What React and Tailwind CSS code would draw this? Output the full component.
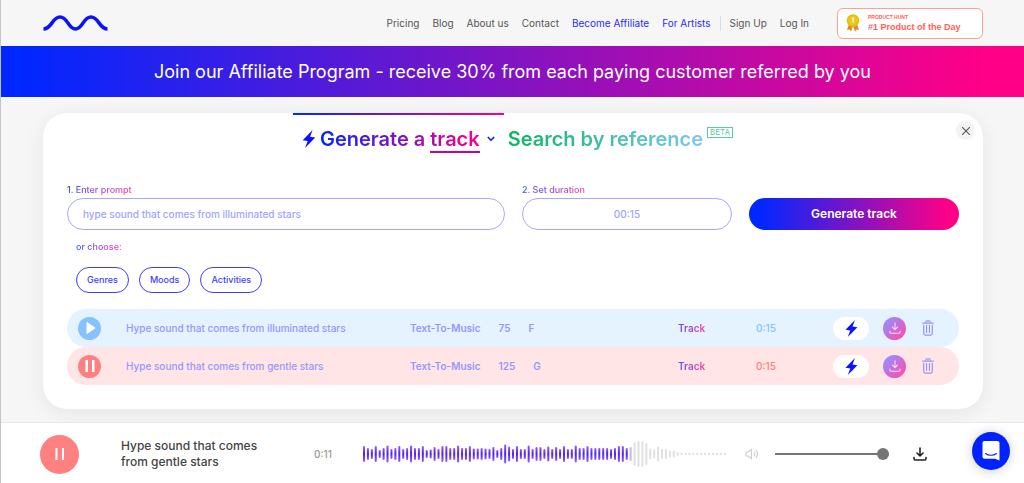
import { useState } from "react";

const navLinks = [
  { label: "Pricing" },
  { label: "Blog" },
  { label: "About us" },
  { label: "Contact" },
  { label: "Become Affiliate", highlight: true },
  { label: "For Artists", highlight: true },
];

const tracks = [
  { title: "Hype sound that comes from illuminated stars", bpm: "75", keyName: "F", time: "0:15", playing: false },
  { title: "Hype sound that comes from gentle stars", bpm: "125", keyName: "G", time: "0:15", playing: true },
];

const waveHeights = [
  16, 12, 10, 16, 8, 12, 17, 10, 12, 16, 10, 12, 17, 12, 12, 16, 8, 9, 14, 10, 16, 16, 12, 12,
  17, 12, 12, 16, 11, 11, 12, 11, 10, 14, 8, 12, 19, 15, 10, 16, 10, 10, 17, 10, 14, 14, 10, 15,
  10, 14, 10, 16, 10, 10, 17, 12, 12, 16, 12, 12, 12, 12, 12, 10, 12, 16, 16, 12, 14, 24, 26, 26,
  22, 11, 9, 15, 10, 10, 7, 7, 4, 2, 2, 2, 2, 2, 2, 2, 2, 2, 2, 2, 2,
];
const playedBars = 68;

function Bolt({ className }) {
  return (
    <svg viewBox="0 0 14 20" className={className} aria-hidden="true">
      <path d="M11 0 0 11.4l5.6.9L2.6 20 14 8.4l-5.8-.9z" fill="#0a12ff" />
    </svg>
  );
}

function DownloadIcon({ className, strokeWidth = 1.5 }) {
  return (
    <svg
      viewBox="0 0 14 14"
      className={className}
      fill="none"
      stroke="currentColor"
      strokeWidth={strokeWidth}
      strokeLinecap="round"
      strokeLinejoin="round"
      aria-hidden="true"
    >
      <path d="M7 1v8M4 6l3 3 3-3M1 10.500v1.200c0 .8.6 1.300 1.300 1.300h9.400c.7 0 1.300-.5 1.300-1.300v-1.200" />
    </svg>
  );
}

function TrashIcon() {
  return (
    <svg viewBox="0 0 14 18" className="h-4 w-3" fill="none" stroke="#9797ff" strokeWidth="1.400" strokeLinecap="round" aria-hidden="true">
      <path d="M.8 3.200h12.400M4.700 2.800V1.800c0-.6.4-1 1-1h2.600c.6 0 1 .4 1 1V2.800M2 5.500v10c0 1 .7 1.700 1.700 1.700h6.600c1 0 1.700-.7 1.700-1.700v-10M5.300 6v8M8.700 6v8" />
    </svg>
  );
}

function Header() {
  return (
    <header className="flex h-[46px] items-center justify-between pr-[41px] pl-[42px]">
      <a href="#home" aria-label="Home">
        <svg viewBox="0 0 65 18" className="h-[18px] w-[65px]" fill="none" aria-hidden="true">
          <path
            d="M.5 15C9 15 9 3 17 3s8 12 15.500 12S40 3 48 3s8 12 16.500 12"
            stroke="#0a12ff"
            strokeWidth="3.600"
          />
        </svg>
      </a>
      <div className="flex items-center">
        <nav className="flex items-center gap-[13px] text-[10px] leading-4 text-[#555]">
          {navLinks.map((l) => (
            <a key={l.label} href="#nav" className={l.highlight ? "text-[#2a2aff]" : ""}>
              {l.label}
            </a>
          ))}
          <span className="-mx-1 h-[15px] w-px bg-[#dcdcdc]" />
          <a href="#signup">Sign Up</a>
          <a href="#login">Log In</a>
        </nav>
        <a
          href="#product-hunt"
          className="ml-7 flex h-[31px] w-[146px] items-center gap-2 rounded-md border border-[#ff9f98] bg-white pl-2 text-[#ff6154]"
        >
          <svg viewBox="0 0 14 18" className="h-[18px] w-[14px]" aria-hidden="true">
            <path d="M3 10 1 16l2.500-.6L5 17.500 7 12l2 5.500 1.500-2.100L13 16l-2-6z" fill="#e08a2c" />
            <circle cx="7" cy="6.500" r="6.300" fill="#e3bd10" />
            <circle cx="7" cy="6.500" r="4.700" fill="#e8c91e" />
            <path d="M5.800 5 7.200 4v5" fill="none" stroke="#fff3b0" strokeWidth="1.200" />
          </svg>
          <span className="flex flex-col font-['Liberation_Sans',Arial,sans-serif] font-bold">
            <span className="text-[5px] leading-[8px]">PRODUCT HUNT</span>
            <span className="text-[9px] leading-[12px]">#1 Product of the Day</span>
          </span>
        </a>
      </div>
    </header>
  );
}

function Tabs() {
  return (
    <div role="tablist" className="flex justify-center text-[20px] leading-6 font-semibold">
      <button
        role="tab"
        aria-selected="true"
        className="flex h-[49px] items-center border-t-2 border-transparent bg-[linear-gradient(90deg,#0027ff,#ff0087)] bg-[length:100%_2px] bg-no-repeat bg-origin-border px-[9px]"
      >
        <Bolt className="mr-1 h-[18px] w-[14px]" />
        <span className="bg-[linear-gradient(90deg,#0027ff,#ff0087)] bg-clip-text text-transparent">
          Generate a <span className="border-b-2 border-[#c8009c]">track</span>
        </span>
        <svg viewBox="0 0 8 6" className="ml-[7px] h-[6px] w-2" fill="none" stroke="#0a12ff" strokeWidth="1.500" aria-hidden="true">
          <path d="m.8 1 3.200 3.200L7.200 1" />
        </svg>
      </button>
      <button role="tab" aria-selected="false" className="flex h-[49px] items-center gap-1 pt-[2px] pl-1">
        <span className="bg-[linear-gradient(90deg,#0bb55e,#7cc8f0)] bg-clip-text text-transparent">
          Search by reference
        </span>
        <span className="mb-3 border border-[#5cc9a8] px-[2px] text-[8px] leading-[9px] font-normal text-[#5cc9a8]">
          BETA
        </span>
      </button>
    </div>
  );
}

function PromptForm() {
  const labelStyle =
    "w-fit bg-[linear-gradient(90deg,#3b55ff,#ff3fa0)] bg-clip-text text-[9px] leading-[17px] font-medium text-transparent";
  return (
    <form onSubmit={(e) => e.preventDefault()} className="mt-[19px]">
      <div className="grid grid-cols-[1fr_210px_210px] items-end gap-[17px]">
        <div className="flex flex-col">
          <label htmlFor="prompt" className={labelStyle}>1. Enter prompt</label>
          <input
            id="prompt"
            defaultValue="hype sound that comes from illuminated stars"
            className="h-8 w-full rounded-full border border-[#a8a8ff] px-[15px] text-[10px] font-medium text-[#a3a3ff] outline-none"
          />
        </div>
        <div className="flex flex-col">
          <label htmlFor="duration" className={labelStyle}>2. Set duration</label>
          <input
            id="duration"
            defaultValue="00:15"
            className="h-8 w-full rounded-full border border-[#a8a8ff] text-center text-[10px] font-medium text-[#a3a3ff] outline-none"
          />
        </div>
        <button className="h-8 rounded-full bg-[linear-gradient(90deg,#0027ff_5%,#ff0087_95%)] text-[12px] font-semibold text-white">
          Generate track
        </button>
      </div>
      <div className="mt-2 pl-[9px]">
        <p className={labelStyle}>or choose:</p>
        <div className="mt-3 flex gap-[10px]">
          {["Genres", "Moods", "Activities"].map((c) => (
            <button
              key={c}
              type="button"
              className="h-[26px] rounded-full border border-[#4040ff] px-[10px] text-[9px] font-medium text-[#4040ff]"
            >
              {c}
            </button>
          ))}
        </div>
      </div>
    </form>
  );
}

function TrackRow({ track }) {
  return (
    <li
      className={`flex h-[38px] items-center rounded-full pr-[25px] pl-[11px] text-[10px] font-medium text-[#9797ff] ${
        track.playing ? "bg-[#ffe5e5]" : "bg-[#e5f2ff]"
      }`}
    >
      <button
        aria-label={track.playing ? "Pause" : "Play"}
        className={`flex size-[23px] items-center justify-center rounded-full ${
          track.playing ? "bg-[#ff8080]" : "bg-[#85c2ff]"
        }`}
      >
        <svg viewBox="0 0 12 12" className="size-3" fill="#fff" aria-hidden="true">
          {track.playing ? (
            <path d="M1.500 0h2.500v12H1.500zM8 0h2.500v12H8z" />
          ) : (
            <path d="M2.500.8c0-.6.5-.9 1-.6l7.500 5.200c.4.300.4.900 0 1.200l-7.500 5.200c-.5.300-1 0-1-.6z" />
          )}
        </svg>
      </button>
      <span className="ml-[25px] w-[284px]">{track.title}</span>
      <span className="flex w-[268px] gap-[18px] font-semibold">
        <span>Text-To-Music</span>
        <span>{track.bpm}</span>
        <span>{track.keyName}</span>
      </span>
      <span className="w-[78px] font-semibold">
        <span className="bg-[linear-gradient(90deg,#5c55e8,#ff3fa8)] bg-clip-text text-transparent">Track</span>
      </span>
      <span className={track.playing ? "text-[#ff8080]" : "text-[#85c2ff]"}>{track.time}</span>
      <div className="ml-auto flex items-center gap-[14px]">
        <button aria-label="Boost" className="flex h-[23px] w-9 items-center justify-center rounded-full bg-white">
          <Bolt className="h-[17px] w-[13px]" />
        </button>
        <button
          aria-label="Download track"
          className="flex size-[23px] items-center justify-center rounded-full bg-[linear-gradient(135deg,#9191ff_10%,#ff4db0_90%)] text-white/80"
        >
          <DownloadIcon className="size-3" strokeWidth={1.2} />
        </button>
        <button aria-label="Delete track" className="ml-[2px]">
          <TrashIcon />
        </button>
      </div>
    </li>
  );
}

function Waveform() {
  return (
    <svg viewBox="0 0 366 28" className="h-7 w-full" preserveAspectRatio="none" role="img" aria-label="Waveform">
      <defs>
        <linearGradient id="bar" x1="0" y1="0" x2="0" y2="1">
          <stop offset="0" stopColor="#9a5cff" />
          <stop offset=".5" stopColor="#4a20f5" />
          <stop offset="1" stopColor="#9a5cff" />
        </linearGradient>
      </defs>
      {waveHeights.map((h, i) => (
        <rect
          key={i}
          x={i * 3.9}
          y={14 - h / 2}
          width="2"
          height={h}
          rx={h > 2 ? 1 : 0}
          fill={i < playedBars ? "url(#bar)" : i === playedBars ? "#c9b3ff" : "#e0e0e0"}
        />
      ))}
    </svg>
  );
}

function Player() {
  const [volume, setVolume] = useState(100);
  return (
    <footer className="relative mt-[13px] flex h-[61px] items-center border-t border-[#e8e8e8] bg-white pt-[2px] pr-[97px] pl-[39px]">
      <button aria-label="Pause" className="flex size-[39px] shrink-0 items-center justify-center rounded-full bg-[#ff8080]">
        <svg viewBox="0 0 12 12" className="size-3" fill="#fff" aria-hidden="true">
          <path d="M1.500 0h2v12h-2zM8 0h2v12H8z" />
        </svg>
      </button>
      <p className="ml-[42px] w-[193px] shrink-0 pr-10 text-[12px] leading-4 font-medium text-[#444]">
        Hype sound that comes from gentle stars
      </p>
      <span className="w-[49px] shrink-0 text-[10px] font-medium text-[#999]">0:11</span>
      <div className="min-w-0 flex-1">
        <Waveform />
      </div>
      <button aria-label="Mute" className="ml-[14px]">
        <svg viewBox="0 0 14 12" className="h-3 w-[14px]" fill="none" stroke="#cfcfcf" strokeWidth="1.200" aria-hidden="true">
          <path d="M1 4h2l3.500-2.500v9L3 8H1zM9 3.500c1 1.500 1 3.500 0 5M11 2c1.900 2.400 1.900 5.600 0 8" />
        </svg>
      </button>
      <input
        type="range"
        aria-label="Volume"
        value={volume}
        onChange={(e) => setVolume(Number(e.target.value))}
        className="ml-4 h-3 w-[114px] appearance-none bg-transparent bg-[linear-gradient(#757575,#757575)] bg-[length:100%_2px] bg-center bg-no-repeat [&::-webkit-slider-thumb]:size-3 [&::-webkit-slider-thumb]:appearance-none [&::-webkit-slider-thumb]:rounded-full [&::-webkit-slider-thumb]:bg-[#757575]"
      />
      <button aria-label="Download" className="ml-6 text-[#222]">
        <DownloadIcon className="size-[14px]" strokeWidth={1.6} />
      </button>
      <button
        aria-label="Open chat"
        className="absolute right-[14px] bottom-[13px] flex size-[38px] items-center justify-center rounded-full bg-[#0022ff] shadow-[0_1px_12px_rgba(0,0,0,0.2)]"
      >
        <svg viewBox="0 0 18 20" className="h-5 w-[18px]" aria-hidden="true">
          <path d="M2.500 0h13c1.100 0 2 .9 2 2v17.500L13 17.700H2.500c-1.100 0-2-.9-2-2V2c0-1.100.9-2 2-2z" fill="#fff" />
          <path d="M3.500 12.500c3 2.400 8 2.400 11 0" fill="none" stroke="#0022ff" strokeWidth="1.100" strokeLinecap="round" />
        </svg>
      </button>
    </footer>
  );
}

export default function App() {
  return (
    <div className="min-h-screen border-l border-[#c4c4c4] bg-[#f6f6f6] font-[Inter,sans-serif]">
      <Header />
      <div className="flex h-[51px] items-center justify-center bg-[linear-gradient(90deg,#0027ff_2%,#ff0087_96%)] text-[18px] text-white">
        <a href="#affiliate">Join our Affiliate Program - receive 30% from each paying customer referred by you</a>
      </div>
      <main className="pt-4 pr-[41px] pl-[42px]">
        <section className="relative rounded-[24px] bg-white px-6 pb-6 shadow-[0_4px_20px_rgba(0,0,0,0.07)]">
          <Tabs />
          <button
            aria-label="Close"
            className="absolute top-2 right-2 flex size-[19px] items-center justify-center rounded-full bg-[#f3f3f3]"
          >
            <svg viewBox="0 0 8 8" className="size-2" stroke="#555" strokeWidth="1.100" aria-hidden="true">
              <path d="m0 0 8 8M8 0 0 8" />
            </svg>
          </button>
          <PromptForm />
          <ul className="mt-4 flex flex-col">
            {tracks.map((t) => (
              <TrackRow key={t.title} track={t} />
            ))}
          </ul>
        </section>
      </main>
      <Player />
    </div>
  );
}
